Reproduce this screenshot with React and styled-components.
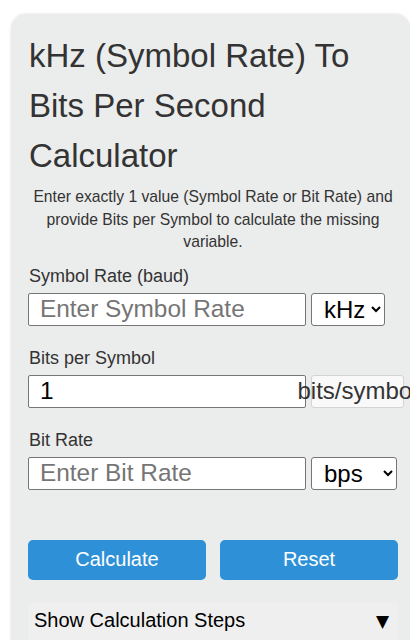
import React from "react";
import styled, { createGlobalStyle } from "styled-components";

const GlobalStyle = createGlobalStyle`
  html, body { margin: 0; padding: 0; background: #ffffff; overflow: hidden; }
  body { font-family: "Liberation Sans", Arial, sans-serif; }
  * { box-sizing: border-box; }
`;

const Page = styled.div`
  padding: 14px 0 0 11px;
`;

const Card = styled.div`
  width: 399px;
  min-height: 660px;
  background: #ebecec;
  border-radius: 15px;
  padding: 17px 12px 0 17px;
  box-shadow: 0 0 3px rgba(0, 0, 0, 0.12);
`;

const Title = styled.h1`
  margin: 0 0 5px 1px;
  font-size: 33px;
  line-height: 50px;
  font-weight: 400;
  color: #333333;
`;

const Intro = styled.p`
  width: 370px;
  margin: 0 0 12px;
  font-size: 15.7px;
  line-height: 22.5px;
  text-align: center;
  color: #333333;
`;

const Form = styled.div`
  width: 370px;
  display: flex;
  flex-direction: column;
  gap: 22px;
`;

const Field = styled.div`
  display: flex;
  flex-direction: column;
`;

const Label = styled.label`
  font-size: 18px;
  line-height: 21px;
  color: #333333;
  margin: 0 0 6px 1px;
`;

const Row = styled.div`
  display: flex;
  gap: 5px;
  width: 370px;
`;

const TextInput = styled.input`
  flex-shrink: 0;
  width: 278px;
  height: 33px;
  padding: 0 11px;
  font-family: "Liberation Sans", Arial, sans-serif;
  font-size: 24.4px;
  color: #000000;
  background: #ffffff;
  border: 1px solid #767676;
  border-radius: 2px;
  outline: none;
  &::placeholder { color: #757575; }
`;

const UnitSelect = styled.select`
  flex-shrink: 0;
  width: ${(p) => p.$w}px;
  height: 33px;
  padding: 0 0 0 8px;
  font-family: "Liberation Sans", Arial, sans-serif;
  font-size: 24px;
  color: #000000;
  background: #ffffff;
  border: 1px solid #767676;
  border-radius: 3px;
`;

const UnitText = styled.span`
  flex-shrink: 0;
  width: 93px;
  height: 33px;
  display: flex;
  align-items: center;
  justify-content: center;
  white-space: nowrap;
  font-size: 24px;
  color: #333333;
  background: #f9f9f9;
  border: 1px solid #d4d4d4;
  border-radius: 3px;
`;

const Buttons = styled.div`
  width: 370px;
  margin-top: 50px;
  display: grid;
  grid-template-columns: 1fr 1fr;
  gap: 14px;
`;

const Button = styled.button`
  height: 40px;
  border: none;
  border-radius: 5px;
  background: #2e91d8;
  color: #ffffff;
  font-family: "Liberation Sans", Arial, sans-serif;
  font-size: 20px;
`;

const Steps = styled.div`
  width: 370px;
  margin-top: 22px;
  height: 40px;
  padding: 0 9px 2px 6px;
  display: flex;
  align-items: center;
  justify-content: space-between;
  background: #efefef;
  border-radius: 5px;
  font-size: 20px;
  color: #000000;
`;

const Arrow = styled.span`
  font-family: "DejaVu Sans", sans-serif;
  font-size: 17px;
`;

export default function App() {
  return (
    <>
      <GlobalStyle />
      <Page>
        <Card>
          <Title>kHz (Symbol Rate) To Bits Per Second Calculator</Title>
          <Intro>
            Enter exactly 1 value (Symbol Rate or Bit Rate) and provide Bits per
            Symbol to calculate the missing variable.
          </Intro>
          <Form>
            <Field>
              <Label>Symbol Rate (baud)</Label>
              <Row>
                <TextInput placeholder="Enter Symbol Rate" />
                <UnitSelect $w={74} defaultValue="kHz">
                  <option>kHz</option>
                </UnitSelect>
              </Row>
            </Field>
            <Field>
              <Label>Bits per Symbol</Label>
              <Row>
                <TextInput defaultValue="1" />
                <UnitText>bits/symbol</UnitText>
              </Row>
            </Field>
            <Field>
              <Label>Bit Rate</Label>
              <Row>
                <TextInput placeholder="Enter Bit Rate" />
                <UnitSelect $w={86} defaultValue="bps">
                  <option>bps</option>
                  <option>kbps</option>
                  <option>Mbps</option>
                  <option>Gbps</option>
                </UnitSelect>
              </Row>
            </Field>
          </Form>
          <Buttons>
            <Button>Calculate</Button>
            <Button>Reset</Button>
          </Buttons>
          <Steps>
            <span>Show Calculation Steps</span>
            <Arrow>▼</Arrow>
          </Steps>
        </Card>
      </Page>
    </>
  );
}
